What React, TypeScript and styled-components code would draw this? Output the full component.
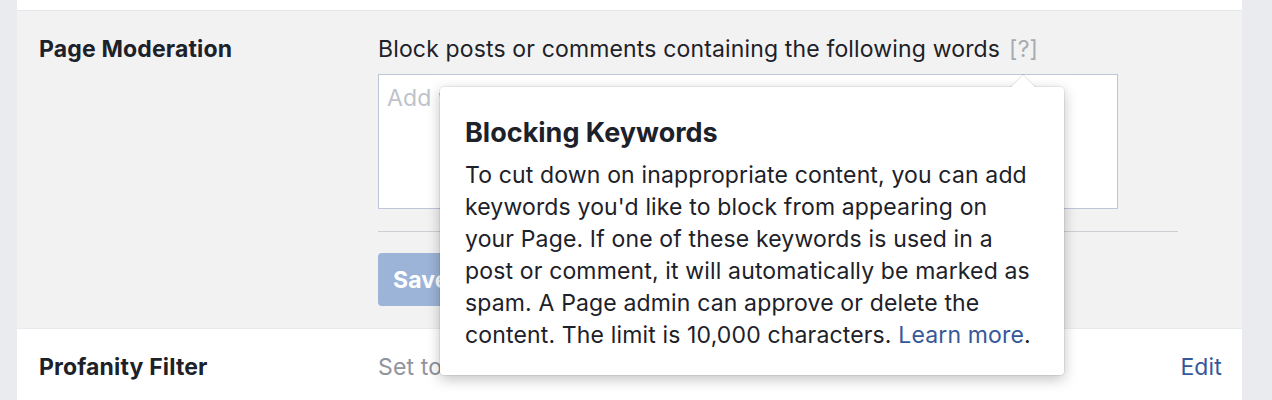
import styled, { createGlobalStyle } from 'styled-components'

const GlobalStyle = createGlobalStyle`
  html, body {
    margin: 0;
    padding: 0;
    background: #e9ebee;
  }
  body {
    font-family: Inter, "Open Sans", "Liberation Sans", sans-serif;
    color: #1d2129;
    -webkit-font-smoothing: antialiased;
  }
`

const Page = styled.div`
  width: 1272px;
  height: 400px;
  overflow: hidden;
  display: flex;
  background: #e9ebee;
`

const Panel = styled.div`
  margin-left: 17px;
  width: 1225px;
  background: #fff;
  display: flex;
  flex-direction: column;
`

const TopStrip = styled.div`
  height: 10px;
  border-bottom: 1px solid #e5e6e9;
`

const Row = styled.div<{ $active?: boolean }>`
  position: relative;
  display: grid;
  grid-template-columns: 339px 1fr auto;
  padding: ${(p) => (p.$active ? '24px 20px 22px 22px' : '24px 20px 0 22px')};
  background: ${(p) => (p.$active ? '#f2f2f2' : '#fff')};
  border-bottom: ${(p) => (p.$active ? '1px solid #e9eaed' : 'none')};
  font-size: 23px;
  line-height: 28px;
  letter-spacing: 0.15px;
`

const Label = styled.div`
  font-weight: 700;
  color: #1d2129;
`

const Content = styled.div`
  display: flex;
  flex-direction: column;
  align-items: flex-start;
`

const Prompt = styled.div`
  color: #1d2129;
  display: flex;
  gap: 9px;
`

const Help = styled.span`
  color: #a7abb1;
`

const KeywordBox = styled.div`
  margin-top: 11px;
  width: 740px;
  height: 135px;
  box-sizing: border-box;
  border: 1px solid #bdc7d8;
  background: #fff;
  padding: 9px 8px;
  color: #bec3c9;
  white-space: nowrap;
  overflow: hidden;
`

const Divider = styled.div`
  margin-top: 22px;
  width: 800px;
  height: 1px;
  background: #ccd0d5;
`

const SaveButton = styled.button`
  margin-top: 21px;
  height: 53px;
  padding: 0 15px;
  border: 0;
  border-radius: 4px;
  background: #9cb4d8;
  color: #fff;
  font-family: inherit;
  font-size: 23px;
  letter-spacing: 0.15px;
  font-weight: 700;
`

const Value = styled.div`
  color: #90949c;
`

const EditLink = styled.a`
  color: #365899;
  text-decoration: none;
`

const Tooltip = styled.div`
  position: absolute;
  left: 423px;
  top: 76px;
  width: 624px;
  height: 288px;
  box-sizing: border-box;
  padding: 30px 25px 0 25px;
  background: #fff;
  border-radius: 4px;
  box-shadow: 0 0 0 1px rgba(0, 0, 0, 0.06), 0 4px 14px rgba(0, 0, 0, 0.25);
  z-index: 2;
  &::before {
    content: '';
    position: absolute;
    top: -13px;
    left: 570px;
    width: 0;
    height: 0;
    border-left: 13px solid transparent;
    border-right: 13px solid transparent;
    border-bottom: 13px solid rgba(0, 0, 0, 0.12);
  }
  &::after {
    content: '';
    position: absolute;
    top: -12px;
    left: 571px;
    width: 0;
    height: 0;
    border-left: 12px solid transparent;
    border-right: 12px solid transparent;
    border-bottom: 12px solid #fff;
  }
`

const TooltipTitle = styled.div`
  font-size: 27px;
  line-height: 32px;
  font-weight: 700;
  letter-spacing: 0;
  color: #1d2129;
`

const TooltipBody = styled.div`
  margin-top: 10px;
  line-height: 32px;
  color: #1d2129;
  white-space: nowrap;
`

const LearnMore = styled.a`
  color: #365899;
  text-decoration: none;
`

export default function App() {
  return (
    <>
      <GlobalStyle />
      <Page>
        <Panel>
          <TopStrip />
          <Row $active>
            <Label>Page Moderation</Label>
            <Content>
              <Prompt>
                Block posts or comments containing the following words
                <Help>[?]</Help>
              </Prompt>
              <KeywordBox>Add words separated by commas...</KeywordBox>
              <Divider />
              <SaveButton>Save Changes</SaveButton>
            </Content>
            <div />
            <Tooltip>
              <TooltipTitle>Blocking Keywords</TooltipTitle>
              <TooltipBody>
                To cut down on inappropriate content, you can add
                <br />
                keywords you'd like to block from appearing on
                <br />
                your Page. If one of these keywords is used in a
                <br />
                post or comment, it will automatically be marked as
                <br />
                spam. A Page admin can approve or delete the
                <br />
                content. The limit is 10,000 characters. <LearnMore>Learn more</LearnMore>.
              </TooltipBody>
            </Tooltip>
          </Row>
          <Row>
            <Label>Profanity Filter</Label>
            <Value>Set to Off</Value>
            <EditLink>Edit</EditLink>
          </Row>
        </Panel>
      </Page>
    </>
  )
}
